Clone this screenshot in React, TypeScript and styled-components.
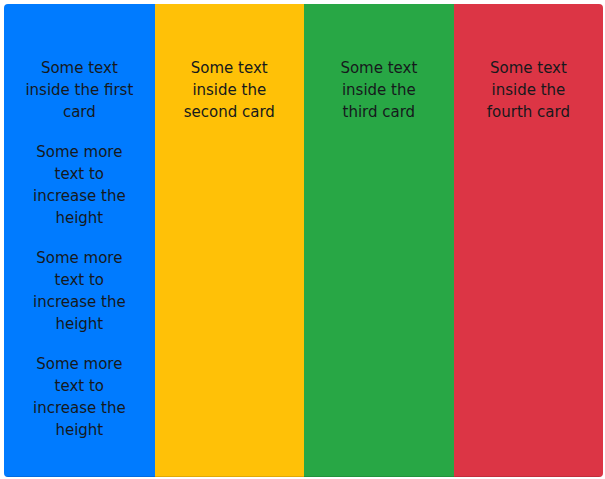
import React from "react";
import styled, { createGlobalStyle } from "styled-components";

const Global = createGlobalStyle`
  html, body { margin: 0; padding: 0; background: #fff; }
  body { padding: 4px; font-family: "DejaVu Sans", Verdana, sans-serif; }
`;

const Group = styled.div`
  display: flex;
  width: 599px;
  height: 473px;
  border-radius: 4px;
  overflow: hidden;
`;

const Card = styled.div<{ $bg: string; $grow: number }>`
  flex: ${(p) => p.$grow} 1 0;
  background: ${(p) => p.$bg};
  padding: 53px 20px 18px;
  text-align: center;
  color: #16191c;
  font-size: 15px;
  line-height: 22px;
  border-bottom: 1px solid rgba(0,0,0,0.12);
`;

const Text = styled.p`
  margin: 0 0 18px;
`;

const cards = [
  { bg: "#007bff", text: "Some text inside the first card", extra: 3, grow: 151 },
  { bg: "#ffc107", text: "Some text inside the second card", extra: 0, grow: 149 },
  { bg: "#28a745", text: "Some text inside the third card", extra: 0, grow: 150 },
  { bg: "#dc3545", text: "Some text inside the fourth card", extra: 0, grow: 149 },
];

export default function App() {
  return (
    <>
      <Global />
      <Group>
        {cards.map((c, i) => (
          <Card key={i} $bg={c.bg} $grow={c.grow}>
            <Text>{c.text}</Text>
            {Array.from({ length: c.extra }).map((_, j) => (
              <Text key={j}>Some more text to increase the height</Text>
            ))}
          </Card>
        ))}
      </Group>
    </>
  );
}
